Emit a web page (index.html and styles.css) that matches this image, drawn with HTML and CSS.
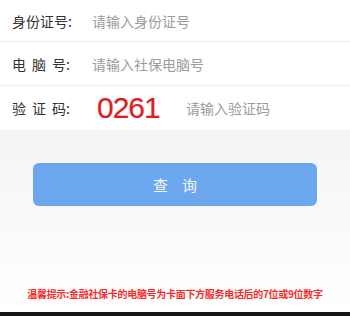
FILE: index.html
```html
<!DOCTYPE html>
<html lang="zh-CN">

<head>
  <meta charset="UTF-8" />
  <meta name="viewport" content="width=device-width, initial-scale=1.0" />
  <title>社保电脑号查询</title>
  <link rel="stylesheet" href="styles.css">
</head>

<body>
  <div class="page">
    <div class="form">
      <div class="row first">
        <label class="label" for="idCard">身份证号:</label>
        <input type="text" id="idCard" class="field" placeholder="请输入身份证号" />
      </div>
      <div class="row second">
        <label class="label" for="pcNo"><span class="spread">电脑</span>号:</label>
        <input type="text" id="pcNo" class="field" placeholder="请输入社保电脑号" />
      </div>
      <div class="row third">
        <label class="label" for="code"><span class="spread">验证</span>码:</label>
        <span class="captcha">0261</span>
        <input type="text" id="code" class="field code" placeholder="请输入验证码" />
      </div>
    </div>

    <div class="main">
      <button class="query"><span>查</span><span>询</span></button>
      <p class="tip">温馨提示:金融社保卡的电脑号为卡面下方服务电话后的7位或9位数字</p>
    </div>

    <div class="bottom-bar"></div>
  </div>
</body>

</html>
```

FILE: styles.css
```css
/* Base resets & typography */
* {
  box-sizing: border-box;
  margin: 0;
  padding: 0;
}

html,
body {
  height: 100%;
  overflow: hidden;
}

body {
  font-family: "Noto Sans CJK SC", "Noto Sans", sans-serif;
  background-color: #fff;
  color: #333;
}

.page {
  display: flex;
  flex-direction: column;
  height: 100%;
}

/* Form rows */
.form {
  background-color: #fff;
}

.row {
  display: flex;
  align-items: center;
  height: 44px;
  padding-left: 12px;
  border-bottom: 1px solid #ebebeb;
}

.row.first {
  height: 42px;
}

.row.third {
  height: 44px;
  border-bottom: none;
}

.label {
  flex-shrink: 0;
  width: 80px;
  font-size: 14px;
  line-height: 20px;
  color: #333;
}

.spread {
  letter-spacing: 6px;
}

.field {
  flex: 1;
  min-width: 0;
  border: none;
  outline: none;
  background: transparent;
  font-family: inherit;
  font-size: 14px;
  line-height: 20px;
  color: #333;
}

.field::placeholder {
  color: #9c9c9c;
}

.captcha {
  flex-shrink: 0;
  width: 94px;
  padding-left: 5px;
  font-family: "Liberation Sans", Arial, sans-serif;
  font-size: 30px;
  letter-spacing: -1px;
  line-height: 30px;
  color: #dc1f26;
  text-shadow: 0 0 1px rgba(220, 31, 38, 0.4);
}

/* Lower area */
.main {
  flex: 1;
  display: flex;
  flex-direction: column;
  align-items: center;
  padding-top: 33px;
  background: linear-gradient(#f4f4f4, #fcfcfc 70%, #fff);
}

.query {
  display: flex;
  justify-content: center;
  align-items: center;
  gap: 14px;
  width: 284px;
  height: 43px;
  border: none;
  border-radius: 6px;
  background-color: #6ca6ec;
  color: #f3f7fd;
  font-family: inherit;
  font-size: 15px;
  cursor: pointer;
}

.tip {
  margin-top: 82px;
  font-size: 10px;
  line-height: 12px;
  letter-spacing: -0.3px;
  font-weight: bold;
  color: #f52c2c;
  text-align: center;
  white-space: nowrap;
}

.bottom-bar {
  height: 4px;
  background-color: #151515;
}
```
